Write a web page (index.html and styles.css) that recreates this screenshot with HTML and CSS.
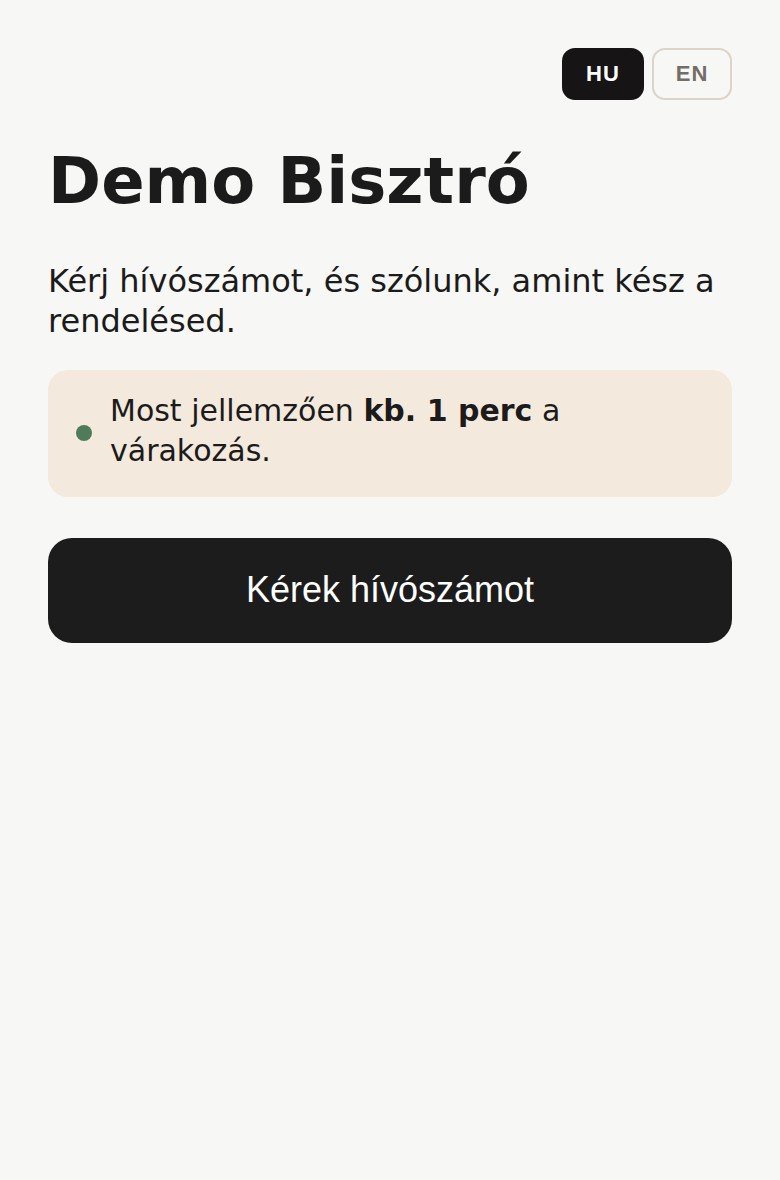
FILE: index.html
```html
<!DOCTYPE html>
<html lang="hu">
<head>
<meta charset="utf-8">
<title>Demo Bisztró</title>
<link rel="stylesheet" href="styles.css">
</head>
<body>
<main class="page">
  <div class="lang-switch">
    <button class="lang lang-active">HU</button>
    <button class="lang">EN</button>
  </div>
  <h1 class="title">Demo Bisztró</h1>
  <p class="lead">Kérj hívószámot, és szólunk, amint kész a rendelésed.</p>
  <div class="wait-box">
    <span class="dot"></span>
    <p class="wait-text">Most jellemzően <strong>kb. 1 perc</strong> a várakozás.</p>
  </div>
  <button class="cta">Kérek hívószámot</button>
</main>
</body>
</html>
```

FILE: styles.css
```css
html, body {
  margin: 0;
  padding: 0;
  background: #f7f7f5;
}
body {
  font-family: "DejaVu Sans", sans-serif;
  color: #1b1b1b;
}
.page {
  padding: 48px 48px;
  display: flex;
  flex-direction: column;
}
.lang-switch {
  display: flex;
  justify-content: flex-end;
  gap: 8px;
}
.lang {
  font-family: "Liberation Sans", Arial, sans-serif;
  font-weight: 700;
  font-size: 22px;
  letter-spacing: 1px;
  height: 52px;
  width: 80px;
  border-radius: 13px;
  border: 2px solid #ddd3c6;
  background: transparent;
  color: #736d68;
  padding: 0;
}
.lang-active {
  width: 82px;
  background: #161415;
  border-color: #161415;
  color: #ffffff;
}
.title {
  margin: 43px 0 0;
  font-size: 64px;
  font-weight: 700;
  line-height: 1.2;
  color: #1b1b1b;
}
.lead {
  margin: 41px 0 0;
  font-size: 32px;
  line-height: 40px;
}
.wait-box {
  margin-top: 29px;
  background: #f3e9dc;
  border-radius: 20px;
  padding: 21px 28px 26px;
  display: flex;
  align-items: center;
  gap: 18px;
}
.dot {
  flex: none;
  width: 16px;
  height: 16px;
  border-radius: 50%;
  background: #4f7b5b;
  margin-top: 5px;
}
.wait-text {
  margin: 0;
  font-size: 30px;
  line-height: 40px;
}
.wait-text strong {
  font-weight: 700;
}
.cta {
  margin-top: 41px;
  height: 105px;
  border: none;
  border-radius: 24px;
  background: #1c1c1c;
  color: #ffffff;
  font-family: "Liberation Sans", Arial, sans-serif;
  font-size: 36px;
  padding: 0;
}
```
